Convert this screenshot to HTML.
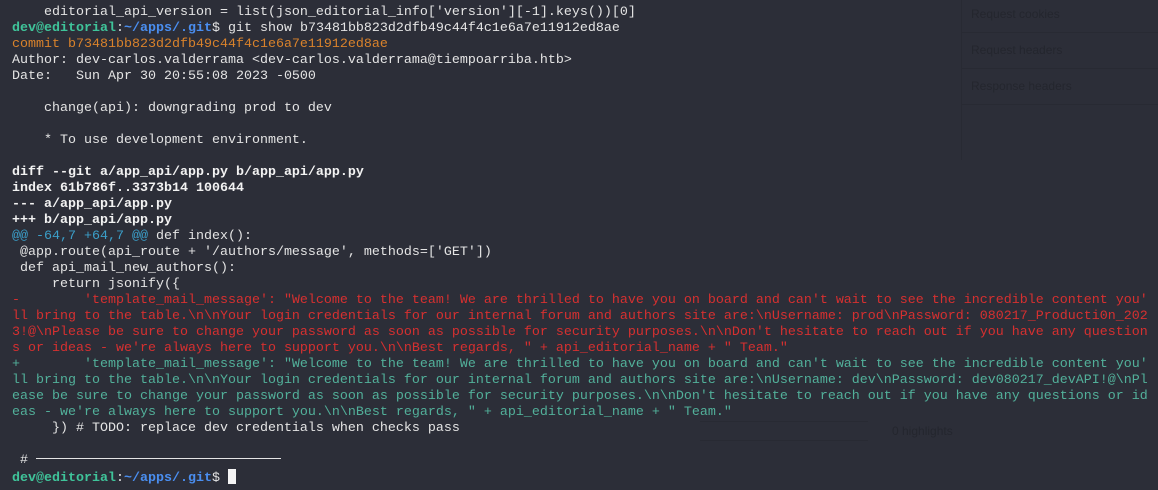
<!DOCTYPE html>
<html><head><meta charset="utf-8">
<style>
html,body{margin:0;padding:0;}
body{width:1158px;height:490px;background:#2c2e38;overflow:hidden;position:relative;font-family:"Liberation Mono","DejaVu Sans Mono",monospace;}
.t{position:absolute;left:12px;top:5px;font-size:13.333px;line-height:16px;white-space:pre;color:#e4e4e4;}
.g{color:#3fc49a;font-weight:bold}
.b{color:#4a8ef0;font-weight:bold}
.o{color:#d9822b}
.r{color:#d63030}
.gr{color:#52b09a}
.c{color:#3b9fc9}
.bo{font-weight:bold;color:#f2f2f2}
.cur{display:inline-block;width:8px;height:15px;background:#f4f4f4;vertical-align:-3px}
.ghost{position:absolute;font-family:"Liberation Sans",sans-serif;font-size:12px;color:#24262e}
.ln{position:absolute;background:#282a33}
.hr{display:inline-block;width:245px;border-top:1px solid #e4e4e4;vertical-align:4px}
</style></head><body>
<div class="ln" style="left:961px;top:0;width:1px;height:160px"></div>
<div class="ln" style="left:961px;top:32px;width:197px;height:1px"></div>
<div class="ln" style="left:961px;top:68px;width:197px;height:1px"></div>
<div class="ln" style="left:961px;top:104px;width:197px;height:1px"></div>
<div class="ghost" style="left:971px;top:7px">Request cookies</div>
<div class="ghost" style="left:971px;top:43px">Request headers</div>
<div class="ghost" style="left:971px;top:79px">Response headers</div>
<div class="ln" style="left:700px;top:421px;width:168px;height:1px"></div>
<div class="ln" style="left:700px;top:440px;width:168px;height:1px"></div>
<div class="ghost" style="left:892px;top:424px">0 highlights</div>
<div class="t">    editorial_api_version = list(json_editorial_info['version'][-1].keys())[0]
<span class="g">dev@editorial</span>:<span class="b">~/apps/.git</span>$ git show b73481bb823d2dfb49c44f4c1e6a7e11912ed8ae
<span class="o">commit b73481bb823d2dfb49c44f4c1e6a7e11912ed8ae</span>
Author: dev-carlos.valderrama &lt;dev-carlos.valderrama@tiempoarriba.htb&gt;
Date:   Sun Apr 30 20:55:08 2023 -0500

    change(api): downgrading prod to dev

    * To use development environment.

<span class="bo">diff --git a/app_api/app.py b/app_api/app.py
index 61b786f..3373b14 100644
--- a/app_api/app.py
+++ b/app_api/app.py</span>
<span class="c">@@ -64,7 +64,7 @@</span> def index():
 @app.route(api_route + '/authors/message', methods=['GET'])
 def api_mail_new_authors():
     return jsonify({
<span class="r">-        'template_mail_message': "Welcome to the team! We are thrilled to have you on board and can't wait to see the incredible content you'
ll bring to the table.\n\nYour login credentials for our internal forum and authors site are:\nUsername: prod\nPassword: 080217_Producti0n_202
3!@\nPlease be sure to change your password as soon as possible for security purposes.\n\nDon't hesitate to reach out if you have any question
s or ideas - we're always here to support you.\n\nBest regards, " + api_editorial_name + " Team."</span>
<span class="gr">+        'template_mail_message': "Welcome to the team! We are thrilled to have you on board and can't wait to see the incredible content you'
ll bring to the table.\n\nYour login credentials for our internal forum and authors site are:\nUsername: dev\nPassword: dev080217_devAPI!@\nPl
ease be sure to change your password as soon as possible for security purposes.\n\nDon't hesitate to reach out if you have any questions or id
eas - we're always here to support you.\n\nBest regards, " + api_editorial_name + " Team."</span>
     }) # TODO: replace dev credentials when checks pass

 # <span class="hr"></span>
<span class="g">dev@editorial</span>:<span class="b">~/apps/.git</span>$ <span class="cur"></span></div>
</body></html>
